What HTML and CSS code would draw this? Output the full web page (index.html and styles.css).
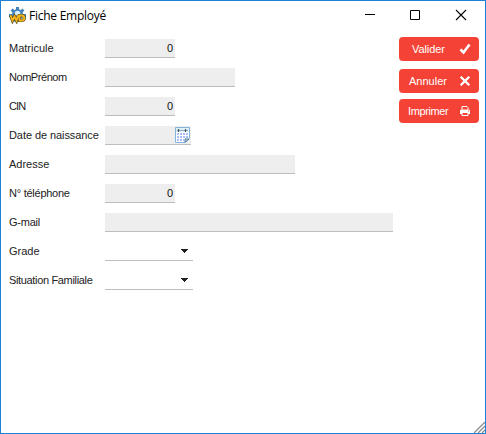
FILE: index.html
```html
<!DOCTYPE html>
<html lang="fr">
<head>
<meta charset="utf-8">
<title>Fiche Employé</title>
<link rel="stylesheet" href="styles.css">
</head>
<body>
<div class="window">
  <header class="titlebar">
    <svg class="app-icon" width="17" height="17" viewBox="0 0 17 17">
      <g fill="#3f83bd"><circle cx="8.5" cy="7.5" r="5.5"/><path d="M7 0h3v4H7zM1.6 3.6l2-2 3 3-2 2zM13.4 1.6l2 2-3 3-2-2zM0 7h3v3H0zM14 7h3v3h-3zM3 13l2-2 2 3-2 1zM14 13l-2-2-2 3 2 1z"/></g>
      <circle cx="8.5" cy="6.5" r="2.8" fill="#d9ecf8"/>
      <path d="M1.5 8.2l2 5.3 2-4 2 4 1.7-5.3M10.5 8.5v5h1.8c4 0 4-5 0-5z" fill="none" stroke="#604d16" stroke-width="3.2"/>
      <path d="M1.5 8.2l2 5.3 2-4 2 4 1.7-5.3M10.5 8.5v5h1.8c4 0 4-5 0-5z" fill="none" stroke="#f2b51d" stroke-width="1.8"/>
    </svg>
    <h1 class="title">Fiche Employé</h1>
    <div class="controls">
      <svg width="46" height="29" viewBox="0 0 46 29"><path d="M19 13.5h10" stroke="#000"/></svg>
      <svg width="46" height="29" viewBox="0 0 46 29"><path d="M18.500 9.500h9v9h-9z" fill="none" stroke="#000"/></svg>
      <svg width="46" height="29" viewBox="0 0 46 29"><path d="M18 9l10 10M28 9L18 19" stroke="#000" stroke-width="1.1"/></svg>
    </div>
  </header>
  <main class="content">
    <div class="form">
      <div class="row"><span class="label">Matricule</span><div class="field short">0</div></div>
      <div class="row"><span class="label name">NomPrénom</span><div class="field medium"></div></div>
      <div class="row"><span class="label cin">CIN</span><div class="field short">0</div></div>
      <div class="row"><span class="label birth">Date de naissance</span><div class="field date">
        <svg width="15" height="16" viewBox="0 0 15 16">
          <path d="M.5 .5h14v11l-4 4H.5z" fill="#fff" stroke="#82b5dc"/>
          <path d="M1 1h13v4H1z" fill="#dff2fa"/>
          <path d="M2 3.500h11" stroke="#91aebe"/>
          <path d="M3.500 2v3M10.500 2v3" stroke="#45545f" stroke-width="1.3"/>
          <path d="M2 7h11M2 10h11M2 13h7" stroke="#a9bdfa" stroke-width="2" stroke-dasharray="2 1"/>
          <path d="M10 15v-3h4z" fill="#d9edf8" stroke="#4b7897"/>
        </svg>
      </div></div>
      <div class="row"><span class="label">Adresse</span><div class="field long"></div></div>
      <div class="row"><span class="label phone">N° téléphone</span><div class="field short">0</div></div>
      <div class="row"><span class="label mail">G-mail</span><div class="field full"></div></div>
      <div class="row"><span class="label">Grade</span><div class="field select"><svg width="7" height="4" viewBox="0 0 7 4"><path d="M0 0h7v1H6v1H5v1H4v1H3V3H2V2H1V1H0z" fill="#202020"/></svg></div></div>
      <div class="row"><span class="label family">Situation Familiale</span><div class="field select"><svg width="7" height="4" viewBox="0 0 7 4"><path d="M0 0h7v1H6v1H5v1H4v1H3V3H2V2H1V1H0z" fill="#202020"/></svg></div></div>
    </div>
    <div class="actions">
      <button class="btn validate"><span>Valider</span><svg width="12" height="12" viewBox="0 0 12 12"><path d="M1.500 6.300l3 3.200 6-8" fill="none" stroke="#fff" stroke-width="2.600"/></svg></button>
      <button class="btn cancel"><span>Annuler</span><svg width="12" height="12" viewBox="0 0 12 12"><path d="M1.700 1.700l8.600 8.600M10.300 1.700l-8.600 8.600" stroke="#fff" stroke-width="2.300"/></svg></button>
      <button class="btn print"><span>Imprimer</span><svg width="12" height="12" viewBox="0 0 12 12"><path d="M3 4.500v-3h5l1 1v2" fill="none" stroke="#fff"/><path d="M2.500 4.500h7q1.500 0 1.500 1.300V9H1V5.800Q1 4.500 2.500 4.500z" fill="#fff"/><path d="M3 7.500h6v3H3z" fill="#f44336" stroke="#fff"/><path d="M9 5.500h1v1H9z" fill="#f44336"/></svg></button>
    </div>
  </main>
  <svg class="grip" width="11" height="11" viewBox="0 0 11 11"><path d="M0 11L11 0M4 11l7-7M8 11l3-3" stroke="#8c8c8c" stroke-width="1.300"/></svg>
</div>
</body>
</html>
```
FILE: styles.css
```css
* { box-sizing: border-box; }
body { margin: 0; }
.window {
  position: relative;
  width: 486px;
  height: 434px;
  border: 1px solid #1c80d4;
  background: #fff;
  color: #222;
  font: 11px/18px "Liberation Sans", Arial, sans-serif;
}
svg { display: block; flex: none; }
.titlebar { display: flex; align-items: center; height: 29px; padding-left: 8px; }
.title {
  margin: 0 0 0 3px;
  color: #000;
  font: 12px/18px "Open Sans", "Noto Sans", sans-serif;
  letter-spacing: -.25px;
  white-space: nowrap;
}
.controls { display: flex; margin-left: auto; margin-right: 1px; }
.content { display: flex; justify-content: space-between; padding: 7px 6px 0 8px; }
.form { display: flex; flex-direction: column; gap: 10px; padding-top: 2px; }
.row { display: flex; height: 19px; }
.label { width: 96px; white-space: nowrap; }
.name { letter-spacing: -.45px; }
.cin { letter-spacing: -.9px; }
.birth { letter-spacing: -.08px; }
.phone { letter-spacing: -.25px; }
.mail { letter-spacing: -.25px; }
.family { letter-spacing: -.34px; }
.field {
  height: 19px;
  padding-right: 2px;
  background: #eee;
  border-bottom: 1px solid #bdbdbd;
  color: #111;
  text-align: right;
}
.short { width: 70px; }
.medium { width: 130px; }
.date { display: flex; justify-content: flex-end; align-items: center; width: 86px; padding-right: 1px; }
.long { width: 190px; }
.full { width: 288px; }
.select { display: flex; justify-content: flex-end; align-items: center; width: 88px; padding-right: 5px; background: #fff; }
.actions { display: flex; flex-direction: column; width: 80px; margin-left: 6px; }
.btn {
  display: flex;
  align-items: center;
  justify-content: space-between;
  height: 24px;
  padding: 0 8px 0 13px;
  border: 0;
  border-radius: 4px;
  background: #f44336;
  color: #fff;
  font: inherit;
}
.validate { letter-spacing: -.1px; }
.cancel { margin-top: 8px; padding-left: 10px; }
.print { margin-top: 6px; padding-left: 9px; letter-spacing: -.4px; }
.grip { position: absolute; right: 0; bottom: 0; }
```
